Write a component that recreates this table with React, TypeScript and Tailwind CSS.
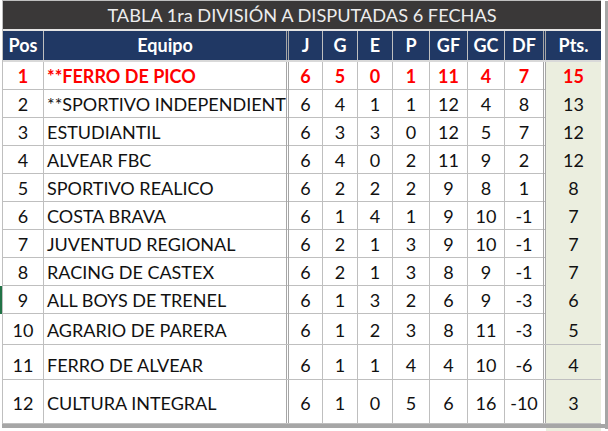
const cols = 'grid grid-cols-[41px_245px_34px_35px_35px_37px_38px_37px_41px_55px]';

const heads = ['Pos', 'Equipo', 'J', 'G', 'E', 'P', 'GF', 'GC', 'DF', 'Pts.'];

const rows: { pos: number; team: string; n: (string | number)[]; h: string; pb: string }[] = [
  { pos: 1, team: '**FERRO DE PICO', n: [6, 5, 0, 1, 11, 4, 7, 15], h: 'h-[28px]', pb: 'pb-0' },
  { pos: 2, team: '**SPORTIVO INDEPENDIENTE', n: [6, 4, 1, 1, 12, 4, 8, 13], h: 'h-[28px]', pb: 'pb-0' },
  { pos: 3, team: 'ESTUDIANTIL', n: [6, 3, 3, 0, 12, 5, 7, 12], h: 'h-[28px]', pb: 'pb-0' },
  { pos: 4, team: 'ALVEAR FBC', n: [6, 4, 0, 2, 11, 9, 2, 12], h: 'h-[28px]', pb: 'pb-0' },
  { pos: 5, team: 'SPORTIVO REALICO', n: [6, 2, 2, 2, 9, 8, 1, 8], h: 'h-[28px]', pb: 'pb-0' },
  { pos: 6, team: 'COSTA BRAVA', n: [6, 1, 4, 1, 9, 10, -1, 7], h: 'h-[28px]', pb: 'pb-0' },
  { pos: 7, team: 'JUVENTUD REGIONAL', n: [6, 2, 1, 3, 9, 10, -1, 7], h: 'h-[28px]', pb: 'pb-0' },
  { pos: 8, team: 'RACING DE CASTEX', n: [6, 2, 1, 3, 8, 9, -1, 7], h: 'h-[28px]', pb: 'pb-0' },
  { pos: 9, team: 'ALL BOYS DE TRENEL', n: [6, 1, 3, 2, 6, 9, -3, 6], h: 'h-[28px]', pb: 'pb-0' },
  { pos: 10, team: 'AGRARIO DE PARERA', n: [6, 1, 2, 3, 8, 11, -3, 5], h: 'h-[31px]', pb: 'pb-0' },
  { pos: 11, team: 'FERRO DE ALVEAR', n: [6, 1, 1, 4, 4, 10, -6, 4], h: 'h-[35px]', pb: 'pb-0' },
  { pos: 12, team: 'CULTURA INTEGRAL', n: [6, 1, 0, 5, 6, 16, -10, 3], h: 'h-[44px]', pb: 'pb-[6px]' },
];

function cellBorder(i: number) {
  if (i === 1 || i === 8) return 'border-r-[3px] border-double border-r-[#a6a6a6]';
  if (i === 9) return '';
  return 'border-r border-r-[#bfbfbf]';
}

export default function App() {
  return (
    <div className="relative w-[608px] h-[431px] bg-white overflow-hidden font-['Lato',sans-serif] text-[18px] text-[#111]">
      <div className="absolute left-0 top-[286px] w-[2px] h-[28px] bg-[#217346]" />
      <div className="flex pl-[2px]">
        <div className="flex flex-col">
          <div className="w-[599px] border-l border-[#bfbfbf]">
            <div className="border-t border-[#bfbfbf] h-[29px] bg-[#3a3838] text-[#ededed] text-[18.2px] flex items-center justify-center leading-none">
              TABLA 1ra DIVISIÓN A DISPUTADAS 6 FECHAS
            </div>
            <div className="h-[2px] bg-[#e4e4e4]" />
            <div className={`${cols} h-[31px] border-b-2 border-[#d9d9d9] bg-[#203864] text-white font-bold`}>
              {heads.map((h, i) => (
                <div key={h} className={`flex items-center justify-center ${cellBorder(i)}`}>
                  {h}
                </div>
              ))}
            </div>
            {rows.map((r) => {
              const red = r.pos === 1;
              return (
                <div
                  key={r.pos}
                  className={`${cols} ${r.h} border-b border-[#bfbfbf] ${red ? 'text-[#f00] font-bold' : ''}`}
                >
                  <div className={`flex items-end justify-center leading-[28px] ${r.pb} ${cellBorder(0)}`}>{r.pos}</div>
                  <div className={`flex items-end pl-[3px] leading-[28px] whitespace-nowrap overflow-hidden ${r.pb} ${cellBorder(1)}`}>
                    {r.team}
                  </div>
                  {r.n.map((v, i) => (
                    <div
                      key={i}
                      className={`flex items-end justify-center leading-[28px] ${r.pb} ${cellBorder(i + 2)} ${i === 7 ? 'bg-[#ebeedf]' : ''}`}
                    >
                      {v}
                    </div>
                  ))}
                </div>
              );
            })}
          </div>
          <div className="flex h-[4px] w-[603px] bg-[#a6a6a6]" />
          <div className="flex">
            <div className="w-[544px]" />
            <div className="w-[55px] h-[3px] bg-[#ebeedf]" />
          </div>
        </div>
        <div className="w-[4px] h-[428px] bg-[#a6a6a6] mt-[1px]" />
      </div>
    </div>
  );
}
